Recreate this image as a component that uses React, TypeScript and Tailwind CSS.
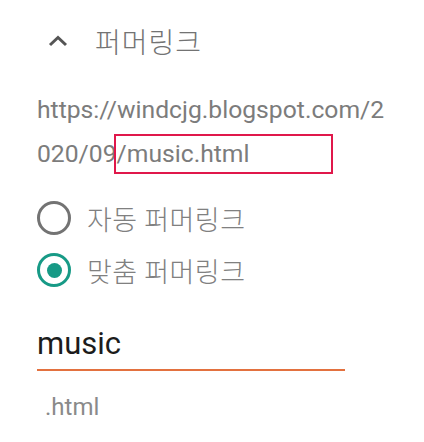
import React from "react";

const Radio = ({ checked, label }: { checked?: boolean; label: string }) => {
  return (
    <div className="flex items-center h-[52px]">
      {checked ? (
        <span className="w-[34px] h-[34px] rounded-full border-[3.5px] border-[#179a86] flex items-center justify-center">
          <span className="w-[15px] h-[15px] rounded-full bg-[#179a86]" />
        </span>
      ) : (
        <span className="w-[34px] h-[34px] rounded-full border-[3px] border-[#737373]" />
      )}
      <span className="ml-[16px] text-[27px] tracking-[0.5px] text-[#808080] font-['Noto_Sans_CJK_KR',sans-serif] font-light leading-none">
        {label}
      </span>
    </div>
  );
};

const App = () => {
  return (
    <div className="w-[424px] h-[442px] bg-white pl-[37px] font-['Roboto',sans-serif] overflow-hidden">
      <div className="flex items-center h-[56px] pt-[26px] pl-[11px]">
        <svg width="20" height="12" viewBox="0 0 20 12" className="shrink-0">
          <path d="M2 10 L10 2.5 L18 10" fill="none" stroke="#555" strokeWidth="3" />
        </svg>
        <span className="ml-[27px] text-[28px] tracking-[1px] text-[#737373] font-['Noto_Sans_CJK_KR',sans-serif] font-light leading-none">
          퍼머링크
        </span>
      </div>

      <p className="mt-[32px] text-[24.7px] leading-[44px] text-[#7c7c7c]">
        https://windcjg.blogspot.com/2
        <br />
        020/09
        <span className="inline-block align-baseline ml-[-3px] w-[219px] h-[40px] border-2 border-[#e0184b] leading-[36px] pl-[1px]">
          /music.html
        </span>
      </p>

      <div className="mt-[16px]">
        <Radio label="자동 퍼머링크" />
        <Radio checked label="맞춤 퍼머링크" />
      </div>

      <div className="w-[308px] mt-[32px] border-b-2 border-[#e3713f] pb-[8px]">
        <span className="text-[31px] text-[#1c1c1c] leading-none">music</span>
      </div>

      <div className="pl-[8px] mt-[24px] text-[24px] text-[#8a8a8a] leading-none">.html</div>
    </div>
  );
};

export default App;
